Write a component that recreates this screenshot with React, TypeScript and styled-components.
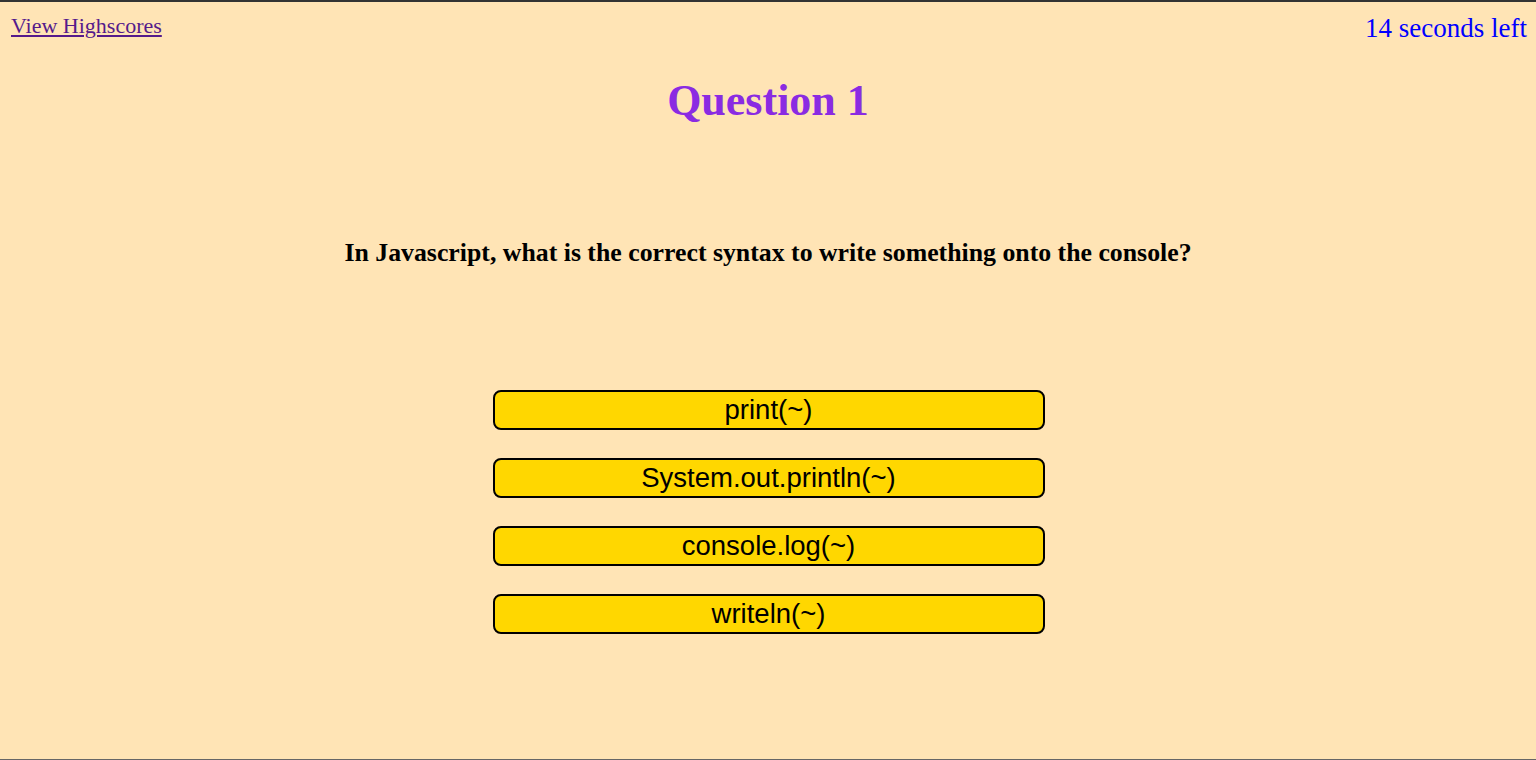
import styled, { createGlobalStyle } from "styled-components"

const GlobalStyle = createGlobalStyle`
  body {
    margin: 0;
    background-color: #ffe4b5;
    font-family: "Liberation Serif", "Times New Roman", serif;
  }
`

const Page = styled.div`
  display: flex;
  flex-direction: column;
  height: 760px;
  box-sizing: border-box;
  border-top: 2px solid #333333;
  border-bottom: 1px solid #666666;
  background-color: #ffe4b5;
`

const TopBar = styled.div`
  display: flex;
  justify-content: space-between;
  align-items: flex-start;
  padding: 11px 9px 0 11px;
`

const ScoresLink = styled.a`
  font-size: 22px;
  color: #551a8b;
  text-decoration: underline;
`

const Timer = styled.span`
  font-size: 27px;
  color: #0000ff;
`

const Title = styled.h1`
  margin: 31px 0 0;
  text-align: center;
  font-size: 44px;
  font-weight: bold;
  color: #8a2be2;
`

const QuestionText = styled.h3`
  margin: 112px 0 0;
  text-align: center;
  font-size: 25.8px;
  font-weight: bold;
  color: #000000;
`

const Answers = styled.div`
  display: flex;
  flex-direction: column;
  align-items: center;
  gap: 28px;
  margin-top: 122px;
`

const AnswerButton = styled.button`
  width: 552px;
  height: 40px;
  margin-left: 1px;
  background-color: #ffd700;
  border: 2px solid #000000;
  border-radius: 8px;
  font-family: "Liberation Sans", Arial, sans-serif;
  font-size: 27.5px;
  line-height: 1;
  color: #000000;
  cursor: pointer;
`

const answers = ["print(~)", "System.out.println(~)", "console.log(~)", "writeln(~)"]

const App = () => {
  return (
    <Page>
      <GlobalStyle />
      <TopBar>
        <ScoresLink href="#">View Highscores</ScoresLink>
        <Timer>14 seconds left</Timer>
      </TopBar>
      <Title>Question 1</Title>
      <QuestionText>
        In Javascript, what is the correct syntax to write something onto the console?
      </QuestionText>
      <Answers>
        {answers.map((a) => (
          <AnswerButton key={a}>{a}</AnswerButton>
        ))}
      </Answers>
    </Page>
  )
}

export default App
